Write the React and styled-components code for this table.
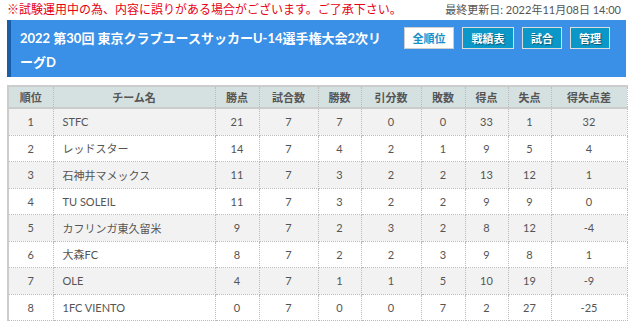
import React from "react";
import styled, { createGlobalStyle } from "styled-components";

const Global = createGlobalStyle`
  html, body { margin: 0; padding: 0; background: #fff; }
  body { font-family: Lato, "Noto Sans CJK JP", sans-serif; }
`;

const Page = styled.div`
  width: 632px;
  padding: 2px 6px 0 7px;
  box-sizing: border-box;
`;

const TopLine = styled.div`
  display: flex;
  justify-content: space-between;
  align-items: center;
  height: 16px;
  line-height: 14px;
  padding-right: 5px;
`;

const Notice = styled.span`
  color: #e60012;
  font-size: 12px;
`;

const Updated = styled.span`
  color: #555;
  font-size: 11px;
`;

const Header = styled.div`
  margin-top: 2px;
  display: flex;
  align-items: flex-start;
  background: #3a8fe6;
  border-left: 4px solid #1b5ea8;
  padding: 6px 16px 3px 9px;
`;

const Title = styled.h1`
  flex: 1;
  margin: 0;
  max-width: 365px;
  color: #fff;
  font-size: 13px;
  font-weight: bold;
  line-height: 24px;
`;

const Buttons = styled.div`
  display: flex;
  gap: 8px;
  margin-top: 1px;
  margin-left: auto;
`;

const Btn = styled.div`
  box-sizing: border-box;
  height: 22px;
  width: ${(p) => p.w}px;
  display: flex;
  align-items: center;
  justify-content: center;
  font-size: 11px;
  font-weight: bold;
  border: 1px solid ${(p) => (p.active ? "#cfcfcf" : "#dcdcdc")};
  background: ${(p) => (p.active ? "#fff" : "#0b98c9")};
  color: ${(p) => (p.active ? "#1590cc" : "#fff")};
  text-shadow: ${(p) => (p.active ? "none" : "1px 1px 1px rgba(0,0,0,0.45)")};
`;

const Table = styled.table`
  margin-top: 8px;
  width: 619px;
  border-collapse: collapse;
  table-layout: fixed;
  font-size: 11px;
  color: #555;
  border-left: 2px solid #ccc;
  border-top: 2px solid #ccc;
`;

const Th = styled.th`
  background: #d5e0e0;
  height: 20px;
  padding: 0;
  font-weight: bold;
  color: #555;
  text-align: center;
  border-right: 1px dotted #bbb;
  border-bottom: 2px solid #ccc;
`;

const Tr = styled.tr`
  background: ${(p) => (p.odd ? "#f2f2f2" : "#fff")};
`;

const Td = styled.td`
  height: 25.5px;
  padding: 0 ${(p) => (p.left ? "9px" : "0")};
  text-align: ${(p) => (p.left ? "left" : "center")};
  border-right: 1px dotted #bbb;
  border-bottom: 1px dotted #bbb;
  white-space: nowrap;
`;

const cols = [45, 162, 44, 59, 43, 60, 44, 43, 43, 76];
const heads = ["順位", "チーム名", "勝点", "試合数", "勝数", "引分数", "敗数", "得点", "失点", "得失点差"];

const rows = [
  [1, "STFC", 21, 7, 7, 0, 0, 33, 1, 32],
  [2, "レッドスター", 14, 7, 4, 2, 1, 9, 5, 4],
  [3, "石神井マメックス", 11, 7, 3, 2, 2, 13, 12, 1],
  [4, "TU SOLEIL", 11, 7, 3, 2, 2, 9, 9, 0],
  [5, "カフリンガ東久留米", 9, 7, 2, 3, 2, 8, 12, -4],
  [6, "大森FC", 8, 7, 2, 2, 3, 9, 8, 1],
  [7, "OLE", 4, 7, 1, 1, 5, 10, 19, -9],
  [8, "1FC VIENTO", 0, 7, 0, 0, 7, 2, 27, -25],
];

export default function App() {
  return (
    <Page>
      <Global />
      <TopLine>
        <Notice>※試験運用中の為、内容に誤りがある場合がございます。ご了承下さい。</Notice>
        <Updated>最終更新日: 2022年11月08日 14:00</Updated>
      </TopLine>
      <Header>
        <Title>2022 第30回 東京クラブユースサッカーU-14選手権大会2次リーグD</Title>
        <Buttons>
          <Btn active w={50}>全順位</Btn>
          <Btn w={52}>戦績表</Btn>
          <Btn w={40}>試合</Btn>
          <Btn w={40}>管理</Btn>
        </Buttons>
      </Header>
      <Table>
        <colgroup>
          {cols.map((w, i) => (
            <col key={i} style={{ width: w }} />
          ))}
        </colgroup>
        <thead>
          <tr>
            {heads.map((h) => (
              <Th key={h}>{h}</Th>
            ))}
          </tr>
        </thead>
        <tbody>
          {rows.map((r, i) => (
            <Tr key={i} odd={i % 2 === 0}>
              {r.map((c, j) => (
                <Td key={j} left={j === 1}>
                  {c}
                </Td>
              ))}
            </Tr>
          ))}
        </tbody>
      </Table>
    </Page>
  );
}
